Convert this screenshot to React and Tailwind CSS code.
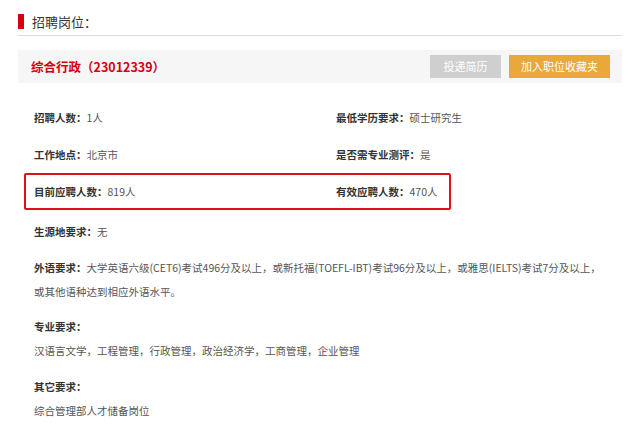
const FONT = { fontFamily: '"Microsoft YaHei", "Noto Sans CJK SC", "Noto Sans", sans-serif' }

function Field({ label, value }) {
  return (
    <div className="flex items-center text-[10.5px] whitespace-nowrap">
      <span className="font-bold text-[#333]">{label}：</span>
      <span className="text-[#555]">{value}</span>
    </div>
  )
}

export default function App() {
  return (
    <div className="w-[640px] h-[439px] bg-white overflow-hidden" style={FONT}>
      <div className="mx-[18px] w-[604px]">
        {/* Section title */}
        <div className="h-[36px] border-b border-[#dcdcdc] flex items-start pt-[14px]">
          <span className="w-[6px] h-[15px] bg-[#d7000f]" />
          <span className="ml-[8px] text-[13px] leading-[15px] text-[#333]">招聘岗位：</span>
        </div>

        {/* Position header */}
        <div className="mt-[14px] h-[33px] bg-[#f6f6f6] flex items-center justify-between pl-[13px] pr-[12px]">
          <span className="text-[12.5px] font-bold text-[#d7000f] pt-[2px]">综合行政（23012339）</span>
          <div className="flex gap-[8px]">
            <button className="w-[71px] h-[23px] bg-[#cfcfcf] text-white text-[11px]">投递简历</button>
            <button className="w-[101px] h-[23px] bg-[#e8a93a] text-white text-[11px]">加入职位收藏夹</button>
          </div>
        </div>

        {/* Basic info */}
        <div className="mt-[16px] pl-[6px]">
          <div className="grid grid-cols-[302px_1fr] h-[37px] items-center pl-[10px]">
            <Field label="招聘人数" value=" 1人" />
            <Field label="最低学历要求" value="硕士研究生" />
          </div>
          <div className="grid grid-cols-[302px_1fr] h-[37px] items-center pl-[10px]">
            <Field label="工作地点" value="北京市" />
            <Field label="是否需专业测评" value="是" />
          </div>
          <div className="w-[427px] h-[37px] border-2 border-[#e0101c] rounded-[2px] grid grid-cols-[302px_1fr] items-center pl-[8px]">
            <Field label="目前应聘人数" value="819人" />
            <Field label="有效应聘人数" value="470人" />
          </div>
        </div>

        {/* Requirements */}
        <div className="pl-[16px] text-[10.5px] leading-[24px] text-[#555]">
          <div className="mt-[10px]">
            <span className="font-bold text-[#333]">生源地要求：</span>无
          </div>
          <div className="mt-[12px] whitespace-nowrap">
            <span className="font-bold text-[#333]">外语要求：</span>大学英语六级(CET6)考试496分及以上，或新托福(TOEFL-IBT)考试96分及以上，或雅思(IELTS)考试7分及以上，
            <br />
            或其他语种达到相应外语水平。
          </div>
          <div className="mt-[11px] font-bold text-[#333]">专业要求：</div>
          <div>汉语言文学，工程管理，行政管理，政治经济学，工商管理，企业管理</div>
          <div className="mt-[12px] font-bold text-[#333]">其它要求：</div>
          <div>综合管理部人才储备岗位</div>
        </div>
      </div>
    </div>
  )
}
